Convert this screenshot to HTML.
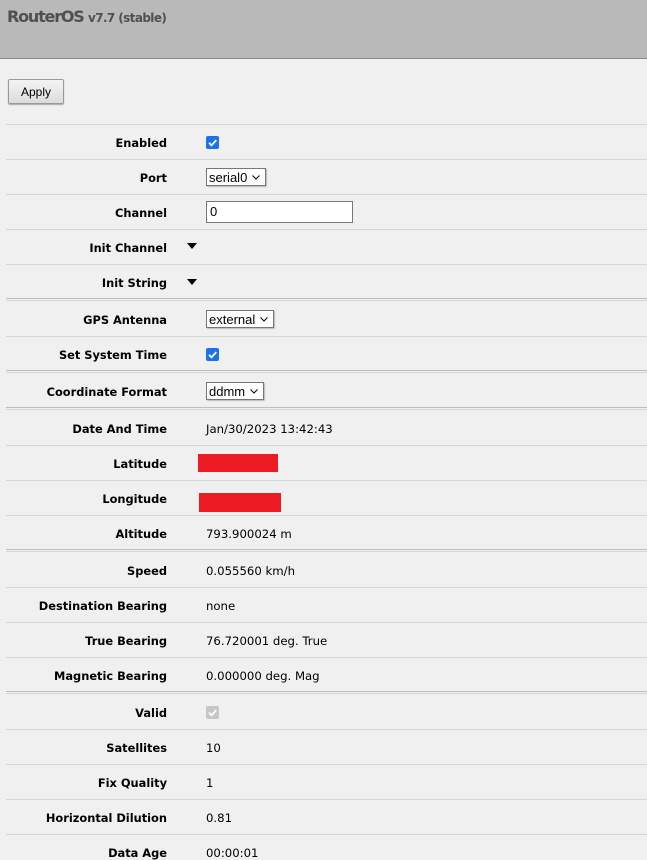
<!DOCTYPE html>
<html><head><meta charset="utf-8"><style>
body{margin:0;width:647px;height:859px;background:#f0f0f0;overflow:hidden;position:relative;font-family:"DejaVu Sans",Verdana,sans-serif;font-size:11px;color:#000}
.hd{position:absolute;left:0;top:0;width:647px;height:58px;background:#b9b9b9;border-bottom:1px solid #8a8a8a}
.hd .t{position:absolute;left:7px;top:7px;font-family:"DejaVu Sans",sans-serif;font-weight:bold;font-size:16px;color:#505050;letter-spacing:-1.2px}
.hd .t span{font-size:12px;letter-spacing:-0.6px}
.btn{position:absolute;left:8px;top:79px;width:54px;height:23px;border:1px solid #999;border-radius:2px;background:linear-gradient(#f4f4f4,#dcdcdc);font-family:"Liberation Sans",sans-serif;font-size:12px;text-align:center;line-height:25px;box-shadow:0 1px 1px #aaa}
.ln{position:absolute;left:6px;right:0;height:1px;background:#d6d6d6}
.ln.s{background:#bdbdbd}
.lb{position:absolute;left:0;width:167px;text-align:right;font-weight:bold;line-height:14px;font-size:11.4px}
.v{position:absolute;left:206px;line-height:14px;font-size:11.7px}
.cb{position:absolute;left:206px;width:13px;height:13px;border-radius:2px;background:#1a73e8}
.cb svg{position:absolute;left:0;top:0}
.sel{position:absolute;left:206px;height:18px;border:1px solid #767676;background:#fff;font-family:"Liberation Sans",sans-serif;font-size:13px;line-height:18px;padding-left:2px;box-sizing:border-box;box-shadow:1px 1px 1px #bbb}
.sel svg{position:absolute;right:5px;top:6px}
.inp{position:absolute;left:206px;top:201px;width:147px;height:22px;border:1px solid #767676;background:#fff;box-sizing:border-box;font-family:"Liberation Sans",sans-serif;font-size:13px;line-height:20px;padding-left:3px}
.tri{position:absolute;left:187px;width:0;height:0;border-left:5px solid transparent;border-right:5px solid transparent;border-top:6px solid #000}
.red{position:absolute;background:#ed1c24}
</style></head><body>
<div class="hd"><div class="t">RouterOS <span>v7.7 (stable)</span></div></div>
<div class="btn">Apply</div>

<div class="ln" style="top:124px"></div>
<div class="ln" style="top:159px"></div>
<div class="ln" style="top:194px"></div>
<div class="ln" style="top:229px"></div>
<div class="ln" style="top:264px"></div>
<div class="ln s" style="top:298px"></div><div class="ln" style="top:300px"></div>
<div class="ln" style="top:336px"></div>
<div class="ln s" style="top:370px"></div><div class="ln" style="top:372px"></div>
<div class="ln s" style="top:407px"></div><div class="ln" style="top:409px"></div>
<div class="ln" style="top:445px"></div>
<div class="ln" style="top:480px"></div>
<div class="ln" style="top:515px"></div>
<div class="ln s" style="top:549px"></div><div class="ln" style="top:551px"></div>
<div class="ln" style="top:587px"></div>
<div class="ln" style="top:622px"></div>
<div class="ln" style="top:657px"></div>
<div class="ln s" style="top:691px"></div><div class="ln" style="top:693px"></div>
<div class="ln" style="top:729px"></div>
<div class="ln" style="top:764px"></div>
<div class="ln" style="top:799px"></div>
<div class="ln" style="top:834px"></div>

<div class="lb" style="top:136px">Enabled</div>
<div class="cb" style="top:136px"><svg width="13" height="13"><path d="M3 6.8l2.5 2.5 4.8-5.2" stroke="#fff" stroke-width="1.8" fill="none"/></svg></div>

<div class="lb" style="top:171px">Port</div>
<div class="sel" style="top:168px;width:60px">serial0<svg width="8" height="5"><path d="M0.5 0.5l3.5 3.5 3.5-3.5" stroke="#000" fill="none"/></svg></div>

<div class="lb" style="top:206px">Channel</div>
<div class="inp">0</div>

<div class="lb" style="top:241px">Init Channel</div>
<div class="tri" style="top:243px"></div>
<div class="lb" style="top:276px">Init String</div>
<div class="tri" style="top:279px"></div>

<div class="lb" style="top:313px">GPS Antenna</div>
<div class="sel" style="top:310px;width:68px">external<svg width="8" height="5"><path d="M0.5 0.5l3.5 3.5 3.5-3.5" stroke="#000" fill="none"/></svg></div>

<div class="lb" style="top:348px">Set System Time</div>
<div class="cb" style="top:348px"><svg width="13" height="13"><path d="M3 6.8l2.5 2.5 4.8-5.2" stroke="#fff" stroke-width="1.8" fill="none"/></svg></div>

<div class="lb" style="top:385px">Coordinate Format</div>
<div class="sel" style="top:382px;width:58px">ddmm<svg width="8" height="5"><path d="M0.5 0.5l3.5 3.5 3.5-3.5" stroke="#000" fill="none"/></svg></div>

<div class="lb" style="top:422px">Date And Time</div><div class="v" style="top:422px">Jan/30/2023 13:42:43</div>
<div class="lb" style="top:457px">Latitude</div><div class="red" style="left:198px;top:454px;width:80px;height:18px"></div>
<div class="lb" style="top:492px">Longitude</div><div class="red" style="left:199px;top:493px;width:82px;height:19px"></div>
<div class="lb" style="top:527px">Altitude</div><div class="v" style="top:527px">793.900024 m</div>

<div class="lb" style="top:564px">Speed</div><div class="v" style="top:564px">0.055560 km/h</div>
<div class="lb" style="top:599px">Destination Bearing</div><div class="v" style="top:599px">none</div>
<div class="lb" style="top:634px">True Bearing</div><div class="v" style="top:634px">76.720001 deg. True</div>
<div class="lb" style="top:669px">Magnetic Bearing</div><div class="v" style="top:669px">0.000000 deg. Mag</div>

<div class="lb" style="top:706px">Valid</div>
<div class="cb" style="top:706px;background:#c6c6c6"><svg width="13" height="13"><path d="M3 6.8l2.5 2.5 4.8-5.2" stroke="#fff" stroke-width="1.8" fill="none"/></svg></div>
<div class="lb" style="top:741px">Satellites</div><div class="v" style="top:741px">10</div>
<div class="lb" style="top:776px">Fix Quality</div><div class="v" style="top:776px">1</div>
<div class="lb" style="top:811px">Horizontal Dilution</div><div class="v" style="top:811px">0.81</div>
<div class="lb" style="top:846px">Data Age</div><div class="v" style="top:846px">00:00:01</div>
</body></html>
